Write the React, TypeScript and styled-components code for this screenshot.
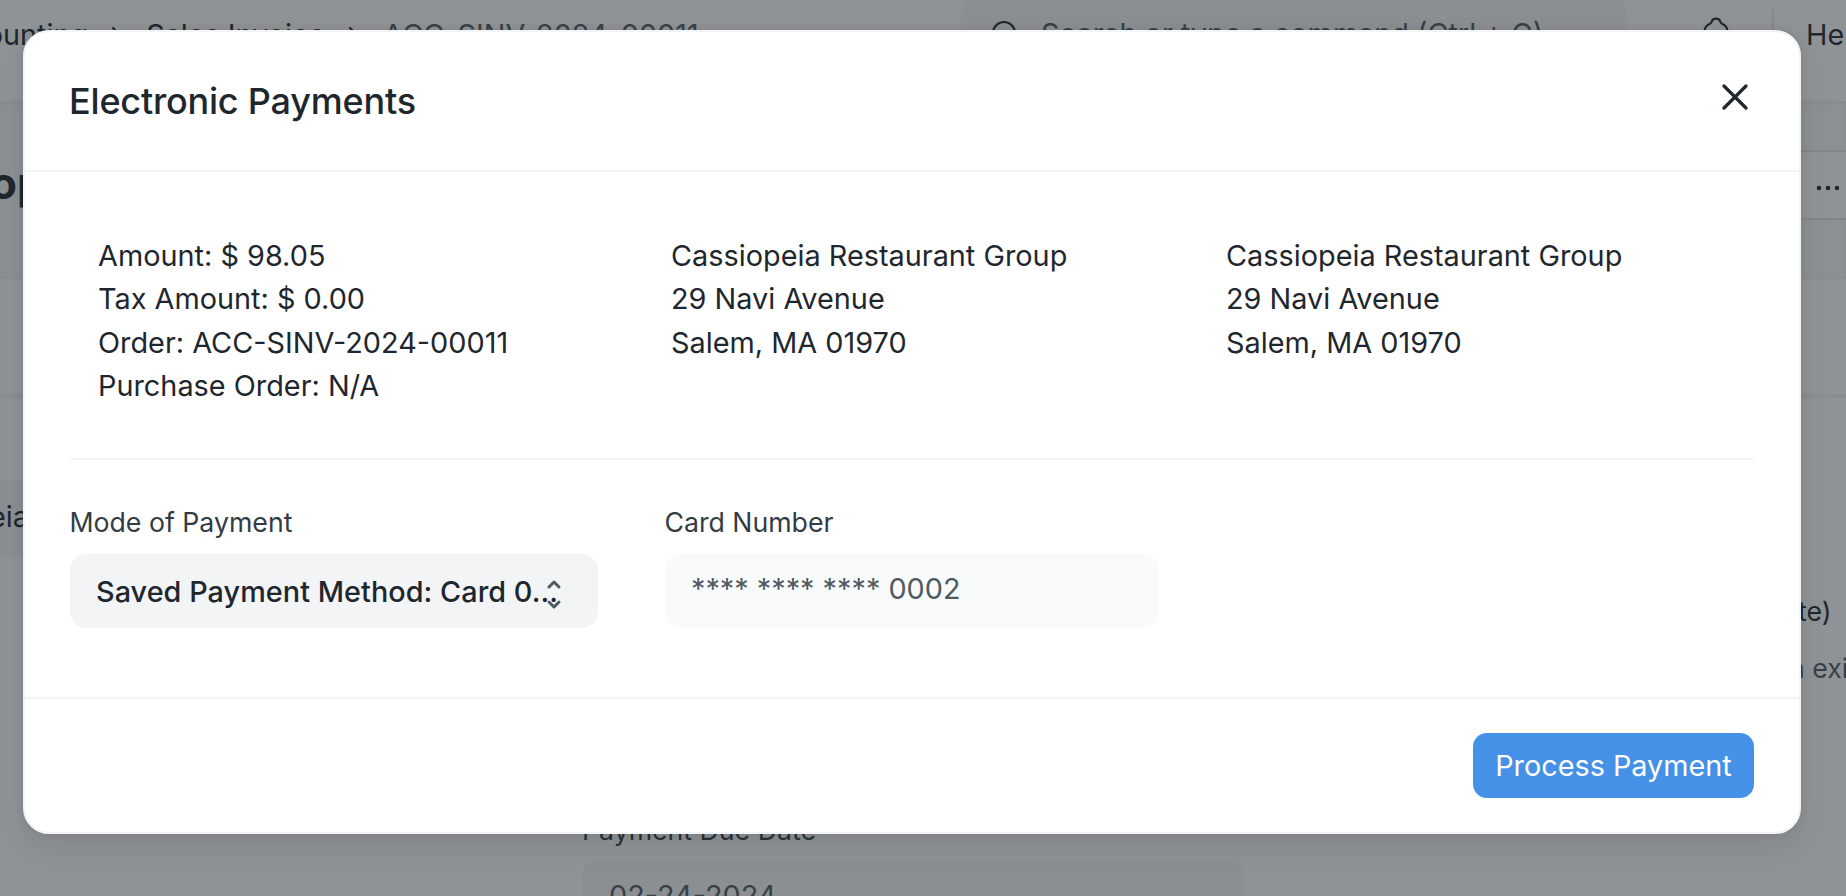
import React from "react";
import styled, { createGlobalStyle } from "styled-components";

const Global = createGlobalStyle`
  * { box-sizing: border-box; }
  html, body { margin: 0; height: 100%; overflow: hidden; background: #fff; }
  body { font-family: Inter, "Liberation Sans", sans-serif; font-size: 28.8px; line-height: 42px; color: #1f272e; }
  button { font: inherit; letter-spacing: inherit; color: inherit; border: 0; background: none; padding: 0; }
`;

const Page = styled.div`
  position: relative;
  width: 1846px;
  height: 896px;
  overflow: hidden;
  display: flex;
  flex-direction: column;
`;

const Navbar = styled.header`
  flex: none;
  height: 101px;
  padding-top: 14px;
  display: flex;
  align-items: flex-start;
  background: #fff;
`;

const Crumbs = styled.nav`
  flex: none;
  width: 1028px;
  margin-left: -67px;
  display: flex;
  align-items: center;
  gap: 22px;
  white-space: nowrap;
`;

const Current = styled.span`
  color: #505a62;
`;

const SearchBar = styled.div`
  flex: none;
  width: 666px;
  height: 68px;
  margin-top: -17px;
  padding: 6px 0 0 30px;
  display: flex;
  align-items: center;
  gap: 22px;
  border-radius: 16px;
  background: #f6f7f7;
  color: #505a62;
  white-space: nowrap;
`;

const NavTools = styled.div`
  display: flex;
  align-items: flex-start;
  padding-left: 73px;
`;

const NavDivider = styled.i`
  flex: none;
  width: 2px;
  height: 56px;
  margin: -6px 32px 0 40px;
  background: #e2e6e9;
`;

const PageHead = styled.div`
  flex: none;
  height: 178px;
  display: flex;
  justify-content: space-between;
  align-items: flex-start;
  padding-top: 49px;
  background: #f7f8f8;
  box-shadow: inset 0 3px 4px -1px rgba(0, 0, 0, 0.06), inset 0 -3px 4px -2px rgba(0, 0, 0, 0.04);
`;

const PageTitle = styled.h1`
  margin: 8px 0 0 -10px;
  font-size: 44px;
  line-height: 50px;
  font-weight: 700;
`;

const MoreButton = styled.button`
  width: 72px;
  height: 70px;
  margin-right: -18px;
  padding-top: 5px;
  display: flex;
  align-items: center;
  justify-content: center;
  border: 2px solid #e2e4e6;
  border-radius: 14px;
  background: #fff;
`;

const Tabs = styled.div`
  flex: none;
  height: 119px;
  border-bottom: 4px solid #f4f5f6;
`;

const FormBody = styled.div`
  flex: 1;
  display: grid;
  grid-template-columns: 582px 1fr 50px;
  padding-top: 82px;
`;

const CustomerField = styled.div`
  width: 540px;
  height: 76px;
  margin-left: -11px;
  padding-top: 16px;
  border-radius: 14px;
  background: #f6f7f7;
`;

const DueField = styled.div`
  padding-top: 331px;
`;

const DueLabel = styled.div`
  font-size: 26.7px;
  line-height: 39px;
  color: #333c44;
`;

const DueInput = styled.div`
  width: 662px;
  height: 76px;
  margin-top: 10px;
  padding: 15px 27px;
  border-radius: 16px;
  background: #f6f7f7;
  color: #505a62;
`;

const RightNotes = styled.div`
  width: 200px;
  padding-top: 112px;
  white-space: nowrap;
`;

const Note = styled.div<{ $muted?: boolean }>`
  font-size: 26.7px;
  line-height: 39px;
  margin-bottom: 18px;
  margin-left: ${(p) => (p.$muted ? "-7px" : "2px")};
  color: ${(p) => (p.$muted ? "#505a62" : "#1f272e")};
`;

const Backdrop = styled.div`
  position: absolute;
  inset: 0;
  padding: 30px 45px 62px 23px;
  display: flex;
  background: rgba(31, 39, 46, 0.5);
`;

const Dialog = styled.section`
  flex: 1;
  display: flex;
  flex-direction: column;
  border: 2px solid #f3f4f6;
  border-radius: 26px;
  background: #fff;
  box-shadow: 0 0 10px rgba(0, 0, 0, 0.08), 0 14px 32px rgba(0, 0, 0, 0.08);
`;

const DialogHead = styled.header`
  height: 140px;
  padding: 0 44px;
  display: flex;
  align-items: center;
  justify-content: space-between;
  border-bottom: 2px solid #f3f4f5;
`;

const DialogTitle = styled.h2`
  margin: 0;
  font-size: 36px;
  line-height: 54px;
  font-weight: 500;
  letter-spacing: -0.2px;
`;

const CloseButton = styled.button`
  width: 40px;
  height: 40px;
  display: flex;
  align-items: center;
  justify-content: center;
  margin-bottom: 8px;
`;

const DialogBody = styled.div`
  flex: 1;
  padding: 62px 45px 0;
`;

const Summary = styled.div`
  height: 226px;
  padding-left: 28px;
  display: grid;
  grid-template-columns: 573px 555px 1fr;
  border-bottom: 2px solid #f3f4f5;
`;

const InfoBlock = styled.div`
  font-size: 28.85px;
  line-height: 43.3px;
  white-space: nowrap;
`;

const Fields = styled.div`
  display: flex;
  gap: 67px;
  padding-top: 43px;
`;

const Field = styled.div<{ $width: number }>`
  width: ${(p) => p.$width}px;
`;

const FieldLabel = styled.label`
  display: block;
  margin: 0 0 12px -0.6px;
  font-size: 26.7px;
  line-height: 39px;
  color: #333c44;
`;

const Select = styled.div`
  position: relative;
  height: 74px;
  padding: 17px 0 0 26px;
  border-radius: 16px;
  background: #f3f4f6;
  font-weight: 500;
  letter-spacing: 0.05px;
  white-space: nowrap;
`;

const SelectArrows = styled.svg`
  position: absolute;
  right: 36px;
  top: 25px;
`;

const ReadOnly = styled.div`
  height: 74px;
  padding: 14px 26px;
  border-radius: 16px;
  background: #f9fafa;
  color: #505a62;
`;

const DialogFoot = styled.footer`
  height: 135px;
  padding: 0 45px;
  display: flex;
  align-items: center;
  justify-content: flex-end;
  border-top: 2px solid #f3f4f5;
`;

const PrimaryButton = styled.button`
  width: 281px;
  height: 65px;
  border-radius: 14px;
  background: #4491e7;
  color: #fff;
`;

const Chevron = () => (
  <svg width="14" height="20" viewBox="0 0 14 20" fill="none" stroke="#1f272e" strokeWidth="2.2" strokeLinecap="round" strokeLinejoin="round">
    <path d="M3 3l7 7-7 7" />
  </svg>
);

export default function App() {
  return (
    <>
      <Global />
      <Page>
        <Navbar>
          <Crumbs>
            <span>Accounting</span>
            <Chevron />
            <span>Sales Invoice</span>
            <Chevron />
            <Current>ACC-SINV-2024-00011</Current>
          </Crumbs>
          <SearchBar>
            <svg width="28" height="28" viewBox="0 0 28 28" fill="none" stroke="#1f272e" strokeWidth="2.2" strokeLinecap="round">
              <circle cx="13" cy="13" r="11" />
              <path d="M21 21l5 5" />
            </svg>
            <span>Search or type a command (Ctrl + G)</span>
          </SearchBar>
          <NavTools>
            <svg width="32" height="36" viewBox="0 0 32 36" fill="none" stroke="#1f272e" strokeWidth="2.2" strokeLinejoin="round">
              <path d="M4.500 26V18C4.500 14.500 6.500 11.500 9 10.300C11.500 9.500 11.300 9 12 7C12.600 5.200 14 4.600 16 4.600C18 4.600 19.400 5.200 20 7C20.700 9 20.500 9.500 23 10.300C25.500 11.500 27.500 14.500 27.500 18V26Z" />
            </svg>
            <NavDivider />
            <span>Help</span>
          </NavTools>
        </Navbar>
        <PageHead>
          <PageTitle>op</PageTitle>
          <MoreButton>
            <svg width="24" height="6" viewBox="0 0 24 6" fill="#1f272e">
              <circle cx="3" cy="3" r="2.300" />
              <circle cx="12" cy="3" r="2.300" />
              <circle cx="21" cy="3" r="2.300" />
            </svg>
          </MoreButton>
        </PageHead>
        <Tabs />
        <FormBody>
          <CustomerField>eia</CustomerField>
          <DueField>
            <DueLabel>Payment Due Date</DueLabel>
            <DueInput>02-24-2024</DueInput>
          </DueField>
          <RightNotes>
            <Note>te)</Note>
            <Note $muted>n exi</Note>
          </RightNotes>
        </FormBody>
        <Backdrop>
          <Dialog>
            <DialogHead>
              <DialogTitle>Electronic Payments</DialogTitle>
              <CloseButton aria-label="Close">
                <svg width="26" height="26" viewBox="0 0 26 26" fill="none" stroke="#1f272e" strokeWidth="3.2" strokeLinecap="round">
                  <path d="M2 2L24 24M24 2L2 24" />
                </svg>
              </CloseButton>
            </DialogHead>
            <DialogBody>
              <Summary>
                <InfoBlock>
                  <div>Amount: $ 98.05</div>
                  <div>Tax Amount: $ 0.00</div>
                  <div>Order: ACC-SINV-2024-00011</div>
                  <div>Purchase Order: N/A</div>
                </InfoBlock>
                <InfoBlock>
                  <div>Cassiopeia Restaurant Group</div>
                  <div>29 Navi Avenue</div>
                  <div>Salem, MA 01970</div>
                </InfoBlock>
                <InfoBlock>
                  <div>Cassiopeia Restaurant Group</div>
                  <div>29 Navi Avenue</div>
                  <div>Salem, MA 01970</div>
                </InfoBlock>
              </Summary>
              <Fields>
                <Field $width={528}>
                  <FieldLabel>Mode of Payment</FieldLabel>
                  <Select>
                    Saved Payment Method: Card 0...
                    <SelectArrows width="16" height="32" viewBox="0 0 16 32" fill="none" stroke="#505a62" strokeWidth="3" strokeLinecap="round" strokeLinejoin="round">
                      <path d="M3 8l5-5 5 5M3 23l5 5 5-5" />
                    </SelectArrows>
                  </Select>
                </Field>
                <Field $width={494}>
                  <FieldLabel>Card Number</FieldLabel>
                  <ReadOnly>**** **** **** 0002</ReadOnly>
                </Field>
              </Fields>
            </DialogBody>
            <DialogFoot>
              <PrimaryButton>Process Payment</PrimaryButton>
            </DialogFoot>
          </Dialog>
        </Backdrop>
      </Page>
    </>
  );
}
